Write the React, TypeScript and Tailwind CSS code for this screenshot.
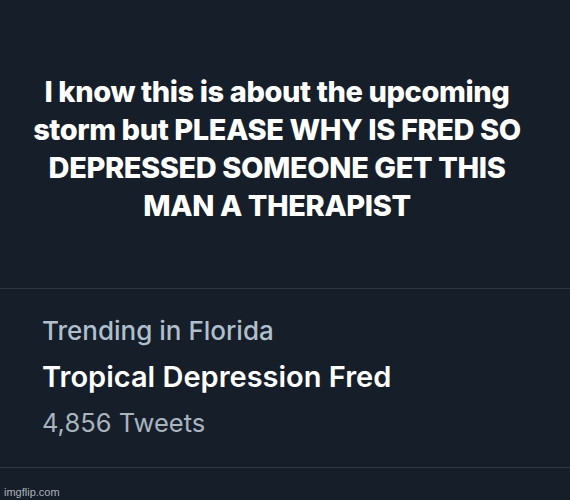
export default function App() {
  return (
    <div className="w-[570px] h-[500px] bg-[#161e29] flex flex-col font-['Inter',sans-serif] overflow-hidden">
      <div className="h-[289px] pt-[73px] pr-4 text-center text-white font-extrabold tracking-[-0.4px] text-[29px] leading-[38px]">
        I know this is about the upcoming
        <br />
        storm but PLEASE WHY IS FRED SO
        <br />
        DEPRESSED SOMEONE GET THIS
        <br />
        MAN A THERAPIST
      </div>
      <div className="border-t border-b border-[#2e3743] h-[180px] pl-[42px] pt-[19px]">
        <div className="text-[26px] leading-[46px] text-[#b0bfcc] font-medium">Trending in Florida</div>
        <div className="text-[29px] leading-[46px] text-white font-semibold">Tropical Depression Fred</div>
        <div className="text-[25.5px] leading-[46px] text-[#a9b4bf]">4,856 Tweets</div>
      </div>
      <div className="pl-[4px] pt-[16px] text-[11px] text-[#aab2ba] font-['Liberation_Sans',sans-serif]">imgflip.com</div>
    </div>
  );
}
